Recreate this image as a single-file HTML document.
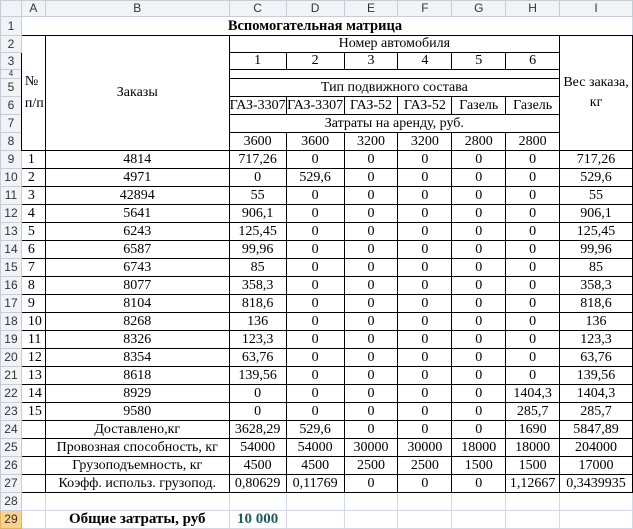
<!DOCTYPE html>
<html><head><meta charset="utf-8"><style>
body{margin:0;background:#fff;width:633px;height:526px;overflow:hidden}
table{border-collapse:collapse;table-layout:fixed;font-family:"Liberation Serif",serif;font-size:14px;color:#000}
td{padding:0 0 1px 0;text-align:center;vertical-align:bottom;white-space:nowrap;overflow:hidden;line-height:15px;border:1px solid #d0d7e5}
td.h{background:#f1f3f6;color:#333;font-family:"Liberation Sans",sans-serif;font-size:12px;border:1px solid #c5cdd8;vertical-align:middle;padding:0}
td.sel{background:#f8d38f;border-color:#e3b35d}
td.b{border:1px solid #000}
td.m{vertical-align:middle}
td.l{text-align:left;padding-left:6px}
</style></head><body>
<table>
<colgroup><col style="width:21px"><col style="width:24px"><col style="width:184px"><col style="width:57px"><col style="width:58px"><col style="width:54px"><col style="width:54px"><col style="width:54px"><col style="width:54px"><col style="width:73px"></colgroup>
<tr style="height:16px"><td class="h"></td><td class="h">A</td><td class="h">B</td><td class="h">C</td><td class="h">D</td><td class="h">E</td><td class="h">F</td><td class="h">G</td><td class="h">H</td><td class="h">I</td></tr>
<tr style="height:19px"><td class="h">1</td><td colspan="9" style="font-weight:bold;font-size:14.5px;padding-right:24px;border-bottom:1px solid #000">Вспомогательная матрица</td></tr>
<tr style="height:16px"><td class="h">2</td><td class="b l m" rowspan="7" style="white-space:normal;padding-left:3px;line-height:22px">№ п/п</td><td class="b m" rowspan="7">Заказы</td><td class="b" colspan="6">Номер автомобиля</td><td class="b m" rowspan="7" style="white-space:normal;line-height:20px">Вес заказа, кг</td></tr>
<tr style="height:17px"><td class="h">3</td><td class="b">1</td><td class="b">2</td><td class="b">3</td><td class="b">4</td><td class="b">5</td><td class="b">6</td></tr>
<tr style="height:9px"><td class="h" style="font-size:8px;line-height:8px">4</td><td class="b" colspan="6"></td></tr>
<tr style="height:18px"><td class="h">5</td><td class="b" colspan="6">Тип подвижного состава</td></tr>
<tr style="height:18px"><td class="h">6</td><td class="b">ГАЗ-3307</td><td class="b">ГАЗ-3307</td><td class="b">ГАЗ-52</td><td class="b">ГАЗ-52</td><td class="b">Газель</td><td class="b">Газель</td></tr>
<tr style="height:18px"><td class="h">7</td><td class="b" colspan="6">Затраты на аренду, руб.</td></tr>
<tr style="height:18px"><td class="h">8</td><td class="b">3600</td><td class="b">3600</td><td class="b">3200</td><td class="b">3200</td><td class="b">2800</td><td class="b">2800</td></tr>
<tr style="height:18px"><td class="h">9</td><td class="b l">1</td><td class="b">4814</td><td class="b">717,26</td><td class="b">0</td><td class="b">0</td><td class="b">0</td><td class="b">0</td><td class="b">0</td><td class="b">717,26</td></tr>
<tr style="height:18px"><td class="h">10</td><td class="b l">2</td><td class="b">4971</td><td class="b">0</td><td class="b">529,6</td><td class="b">0</td><td class="b">0</td><td class="b">0</td><td class="b">0</td><td class="b">529,6</td></tr>
<tr style="height:18px"><td class="h">11</td><td class="b l">3</td><td class="b">42894</td><td class="b">55</td><td class="b">0</td><td class="b">0</td><td class="b">0</td><td class="b">0</td><td class="b">0</td><td class="b">55</td></tr>
<tr style="height:18px"><td class="h">12</td><td class="b l">4</td><td class="b">5641</td><td class="b">906,1</td><td class="b">0</td><td class="b">0</td><td class="b">0</td><td class="b">0</td><td class="b">0</td><td class="b">906,1</td></tr>
<tr style="height:18px"><td class="h">13</td><td class="b l">5</td><td class="b">6243</td><td class="b">125,45</td><td class="b">0</td><td class="b">0</td><td class="b">0</td><td class="b">0</td><td class="b">0</td><td class="b">125,45</td></tr>
<tr style="height:18px"><td class="h">14</td><td class="b l">6</td><td class="b">6587</td><td class="b">99,96</td><td class="b">0</td><td class="b">0</td><td class="b">0</td><td class="b">0</td><td class="b">0</td><td class="b">99,96</td></tr>
<tr style="height:18px"><td class="h">15</td><td class="b l">7</td><td class="b">6743</td><td class="b">85</td><td class="b">0</td><td class="b">0</td><td class="b">0</td><td class="b">0</td><td class="b">0</td><td class="b">85</td></tr>
<tr style="height:18px"><td class="h">16</td><td class="b l">8</td><td class="b">8077</td><td class="b">358,3</td><td class="b">0</td><td class="b">0</td><td class="b">0</td><td class="b">0</td><td class="b">0</td><td class="b">358,3</td></tr>
<tr style="height:18px"><td class="h">17</td><td class="b l">9</td><td class="b">8104</td><td class="b">818,6</td><td class="b">0</td><td class="b">0</td><td class="b">0</td><td class="b">0</td><td class="b">0</td><td class="b">818,6</td></tr>
<tr style="height:18px"><td class="h">18</td><td class="b l">10</td><td class="b">8268</td><td class="b">136</td><td class="b">0</td><td class="b">0</td><td class="b">0</td><td class="b">0</td><td class="b">0</td><td class="b">136</td></tr>
<tr style="height:18px"><td class="h">19</td><td class="b l">11</td><td class="b">8326</td><td class="b">123,3</td><td class="b">0</td><td class="b">0</td><td class="b">0</td><td class="b">0</td><td class="b">0</td><td class="b">123,3</td></tr>
<tr style="height:18px"><td class="h">20</td><td class="b l">12</td><td class="b">8354</td><td class="b">63,76</td><td class="b">0</td><td class="b">0</td><td class="b">0</td><td class="b">0</td><td class="b">0</td><td class="b">63,76</td></tr>
<tr style="height:18px"><td class="h">21</td><td class="b l">13</td><td class="b">8618</td><td class="b">139,56</td><td class="b">0</td><td class="b">0</td><td class="b">0</td><td class="b">0</td><td class="b">0</td><td class="b">139,56</td></tr>
<tr style="height:18px"><td class="h">22</td><td class="b l">14</td><td class="b">8929</td><td class="b">0</td><td class="b">0</td><td class="b">0</td><td class="b">0</td><td class="b">0</td><td class="b">1404,3</td><td class="b">1404,3</td></tr>
<tr style="height:18px"><td class="h">23</td><td class="b l">15</td><td class="b">9580</td><td class="b">0</td><td class="b">0</td><td class="b">0</td><td class="b">0</td><td class="b">0</td><td class="b">285,7</td><td class="b">285,7</td></tr>
<tr style="height:18px"><td class="h">24</td><td class="b"></td><td class="b">Доставлено,кг</td><td class="b">3628,29</td><td class="b">529,6</td><td class="b">0</td><td class="b">0</td><td class="b">0</td><td class="b">1690</td><td class="b">5847,89</td></tr>
<tr style="height:18px"><td class="h">25</td><td class="b"></td><td class="b">Провозная способность, кг</td><td class="b">54000</td><td class="b">54000</td><td class="b">30000</td><td class="b">30000</td><td class="b">18000</td><td class="b">18000</td><td class="b">204000</td></tr>
<tr style="height:18px"><td class="h">26</td><td class="b"></td><td class="b">Грузоподъемность, кг</td><td class="b">4500</td><td class="b">4500</td><td class="b">2500</td><td class="b">2500</td><td class="b">1500</td><td class="b">1500</td><td class="b">17000</td></tr>
<tr style="height:18px"><td class="h">27</td><td class="b"></td><td class="b">Коэфф. использ. грузопод.</td><td class="b">0,80629</td><td class="b">0,11769</td><td class="b">0</td><td class="b">0</td><td class="b">0</td><td class="b">1,12667</td><td class="b">0,3439935</td></tr>
<tr style="height:18px"><td class="h">28</td><td></td><td></td><td></td><td></td><td></td><td></td><td></td><td></td><td></td></tr>
<tr style="height:18px"><td class="h sel">29</td><td></td><td style="font-weight:bold;font-size:15px">Общие затраты, руб</td><td style="font-weight:bold;color:#1f5c5c;font-size:15px">10 000</td><td></td><td></td><td></td><td></td><td></td><td></td></tr>
</table>
</body></html>
